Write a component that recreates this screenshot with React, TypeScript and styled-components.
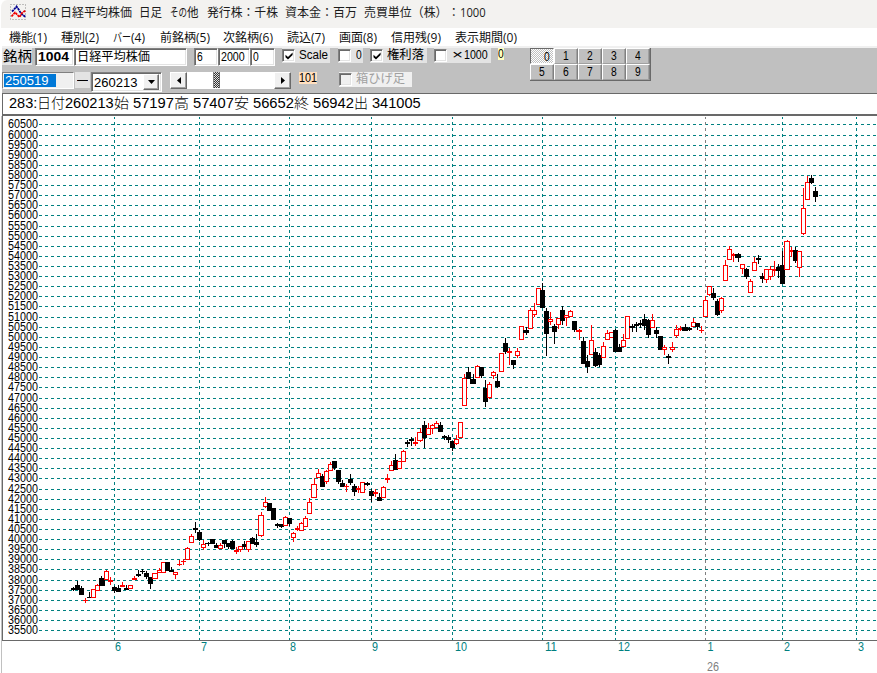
import React, { ReactNode, useLayoutEffect, useRef, useState } from 'react';
import styled, { createGlobalStyle, css } from 'styled-components';

const GlobalStyle = createGlobalStyle`
  * { box-sizing: border-box; }
  html, body { margin: 0; padding: 0; background: #fff; overflow: hidden; }
  body { font: 12px "Liberation Sans", "Noto Sans CJK JP", sans-serif; color: #000; }
`;

/* ---------- text that is condensed or widened to a given width ---------- */

const Slot = styled.span<{ $w: number; $gap?: number }>`
  display: block;
  flex: none;
  width: ${p => p.$w}px;
  margin-left: ${p => p.$gap ?? 0}px;
  white-space: pre;
`;
const Glyphs = styled.span`
  display: inline-block;
  transform-origin: 0 50%;
`;

function Fit({ w, gap, children }: { w: number; gap?: number; children: ReactNode }) {
  const ref = useRef<HTMLSpanElement>(null);
  const [scale, setScale] = useState(1);
  useLayoutEffect(() => {
    if (ref.current) setScale(w / ref.current.offsetWidth);
  }, [w]);
  return (
    <Slot $w={w} $gap={gap}>
      <Glyphs ref={ref} style={{ transform: `scaleX(${scale})` }}>{children}</Glyphs>
    </Slot>
  );
}

/* ---------- window chrome ---------- */

const Window = styled.div`
  width: 877px;
  height: 673px;
  background: #fff;
  display: flex;
  flex-direction: column;
`;
const TitleBar = styled.header`
  height: 28px;
  flex: none;
  display: flex;
  background: #f3f2f0;
  border-left: 1px solid #fff;
  border-top-left-radius: 7px;
  padding: 4px 0 0 9px;
  font: 12.5px/17px "Open Sans", "Noto Sans CJK JP", sans-serif;
  color: #1c1c1c;
`;
const AppIcon = styled.svg`
  width: 17px;
  height: 17px;
  flex: none;
`;
const MenuBar = styled.nav`
  height: 18px;
  flex: none;
  display: flex;
  padding-left: 9px;
  font: 12px/20px "Open Sans", "Noto Sans CJK JP", sans-serif;
  color: #111;
`;
const Toolbar = styled.section`
  height: 47px;
  flex: none;
  margin-left: 2px;
  border-top: 2px solid #f0f0f0;
  background: #c0c0c0;
  display: flex;
  align-items: flex-start;
`;
const Rows = styled.div`
  width: 528px;
  flex: none;
`;
const Row = styled.div<{ $h: number }>`
  display: flex;
  align-items: flex-start;
  height: ${p => p.$h}px;
`;

/* ---------- controls ---------- */

const Label = styled.div<{ $w: number; $h: number; $gap?: number; $bg?: string; $size?: number }>`
  display: flex;
  justify-content: center;
  flex: none;
  width: ${p => p.$w}px;
  height: ${p => p.$h}px;
  margin-left: ${p => p.$gap ?? 0}px;
  background: ${p => p.$bg ?? '#e3e3e3'};
  font-size: ${p => p.$size ?? 12}px;
  line-height: ${p => p.$h}px;
`;
const sunken = css`
  border: 1px solid;
  border-color: #808080 #fff #fff #808080;
  box-shadow: inset 1px 1px #696969, inset -1px -1px #e3e3e3;
`;
const Field = styled.div<{ $w: number; $h?: number; $gap?: number; $bold?: boolean; $size?: number }>`
  ${sunken}
  display: flex;
  flex: none;
  width: ${p => p.$w}px;
  height: ${p => p.$h ?? 18}px;
  margin-left: ${p => p.$gap ?? 0}px;
  padding-left: 2px;
  background: #fff;
  font-size: ${p => p.$size ?? 12}px;
  font-weight: ${p => (p.$bold ? 700 : 400)};
  line-height: ${p => (p.$h ?? 18) - 2}px;
`;
const DateField = styled.div`
  display: flex;
  flex: none;
  width: 72px;
  height: 17px;
  padding: 1px 0 0 1px;
  background: #f0f0f0;
  border: 1px solid;
  border-color: #808080 #fff #fff #808080;
`;
const Selection = styled.div`
  display: flex;
  width: 52px;
  height: 13px;
  padding-left: 1px;
  background: #0078d7;
  color: #fff;
  font-size: 13px;
  line-height: 13px;
`;
const Combo = styled.div`
  ${sunken}
  display: flex;
  justify-content: space-between;
  flex: none;
  width: 71px;
  height: 20px;
  margin-left: 1px;
  padding: 1px 2px 1px 2px;
  background: #fff;
  font-size: 13px;
  line-height: 17px;
`;
const raised = css`
  background: #f0f0f0;
  border: 1px solid;
  border-color: #fff #696969 #696969 #fff;
  box-shadow: inset -1px -1px #a0a0a0;
`;
const ArrowButton = styled.div<{ $w?: number; $h?: number }>`
  ${raised}
  display: flex;
  align-items: center;
  justify-content: center;
  flex: none;
  width: ${p => p.$w ?? 17}px;
  height: ${p => p.$h ?? 17}px;
`;
const Track = styled.div`
  display: flex;
  flex: none;
  width: 121px;
  height: 17px;
  margin-left: 8px;
  background: #fff;
`;
const Thumb = styled.div`
  width: 7px;
  height: 16px;
  margin: 0 54px 0 26px;
  border-left: 1px solid #808080;
  border-right: 1px solid #696969;
  background: repeating-conic-gradient(#333 0 25%, #e0e0e0 0 50%) 0 0 / 2px 2px;
`;
const Check = styled.div<{ $w: number; $gap: number; $off?: boolean }>`
  display: flex;
  align-items: flex-start;
  flex: none;
  width: ${p => p.$w}px;
  height: 15px;
  margin-left: ${p => p.$gap}px;
  background: ${p => (p.$off ? '#f0f0f0' : '#e3e3e3')};
  line-height: 15px;
  color: ${p => (p.$off ? '#a0a0a0' : '#000')};
`;
const Box = styled.div<{ $off?: boolean }>`
  ${sunken}
  flex: none;
  width: 13px;
  height: 13px;
  margin-top: 1px;
  padding: 2px;
  background: ${p => (p.$off ? '#f0f0f0' : '#fff')};
`;
const Tick = styled.svg`
  display: block;
  width: 8px;
  height: 8px;
`;
const Keypad = styled.div`
  display: grid;
  grid-template-columns: repeat(5, 24px);
  grid-auto-rows: 16px;
  flex: none;
  border-right: 1px solid #696969;
  border-bottom: 1px solid #696969;
`;
const Key = styled.div<{ $down?: boolean }>`
  display: flex;
  justify-content: center;
  padding: ${p => (p.$down ? '1px 0 0 9px' : '0')};
  border: 1px solid;
  border-color: ${p => (p.$down ? '#696969 #fff #fff #696969' : '#fff #808080 #a0a0a0 #fff')};
  box-shadow: ${p => (p.$down ? 'none' : 'inset -1px 0 #a0a0a0')};
  background: ${p => (p.$down
    ? 'repeating-conic-gradient(#c0c0c0 0 25%, #fff 0 50%) 0 0 / 2px 2px'
    : '#c0c0c0')};
  line-height: 15px;
`;

/* ---------- quote line and chart ---------- */

const QuoteLine = styled.section`
  display: flex;
  flex: none;
  height: 23px;
  margin-left: 2px;
  padding: 0 0 0 6px;
  border: solid #696969;
  border-width: 1px 0 2px 1px;
  font-size: 14px;
  font-weight: 300;
  line-height: 18px;
`;
const Chart = styled.svg`
  display: block;
  flex: none;
  width: 877px;
  height: 557px;
`;
const AxisText = styled.text`
  font: 12px "Liberation Sans", sans-serif;
`;

type Candle = [x: number, color: 'R' | 'B', high: number, top: number, bottom: number, low: number];
interface Segment { x: number; y: number; candles: Candle[] }

/* Candle values are in thirds of a pixel, relative to the origin of their segment. */
const segments: Segment[] = [
  { x: 0, y: 520, candles: [
    [220,'B',201,204,211,214],[232,'B',182,195,210,210],[244,'B',198,204,224,224],[256,'R',235,241,244,249],
    [268,'B',216,231,234,234],[280,'R',208,208,231,231],[292,'R',192,195,210,210],[305,'B',168,174,197,197],
    [319,'R',150,154,179,179],[331,'R',170,181,185,195],[343,'B',198,201,212,218],[355,'B',195,203,215,215],
    [367,'R',186,195,200,200],[379,'B',195,204,209,209],[391,'R',195,195,206,206],[403,'R',168,174,179,179],
    [415,'B',150,162,167,171],[427,'B',147,153,156,162],[439,'B',153,159,172,177],[451,'B',171,171,192,207],
    [464,'R',159,159,176,176],[478,'R',144,150,158,158],[490,'R',126,126,158,158],[502,'B',126,126,152,152],
    [514,'B',141,150,155,155],[526,'R',156,156,164,177],[538,'R',120,132,135,138],[550,'R',117,123,126,135],
    [562,'R',81,84,117,117],[574,'R',42,48,68,68],[586,'B',6,24,29,39],
  ] },
  { x: 180, y: 440, candles: [
    [58,'B',270,276,299,303],[70,'R',300,312,323,329],[84,'B',306,309,312,317],[97,'B',297,297,312,312],
    [109,'B',310,315,324,324],[121,'R',310,316,326,326],[133,'B',300,300,312,324],[145,'B',309,309,321,326],
    [157,'B',300,303,326,326],[169,'R',321,330,335,342],[181,'R',319,319,329,335],[193,'B',303,312,321,326],
    [205,'R',304,304,329,335],[217,'B',291,294,312,312],[229,'B',282,306,315,321],[243,'R',216,225,287,290],
    [256,'R',171,187,200,204],[268,'B',189,189,212,212],[280,'B',204,204,240,240],[292,'B',249,252,258,263],
    [304,'B',252,252,261,264],[316,'R',228,232,257,257],[328,'B',234,234,251,258],[340,'R',276,280,293,305],
    [352,'R',258,264,269,272],[364,'R',246,250,272,272],[376,'R',228,234,260,260],[388,'R',174,187,221,221],
    [402,'R',114,132,173,173],[415,'R',87,99,112,112],[427,'B',102,108,140,140],[439,'R',90,94,125,132],
    [451,'R',66,73,90,90],[463,'B',63,63,84,90],[475,'B',90,90,125,131],[487,'B',120,129,140,140],
    [499,'R',132,138,141,155],[511,'B',102,117,129,134],[523,'B',132,138,156,168],[535,'R',138,144,149,158],
    [547,'R',127,127,158,158],[562,'B',126,129,134,138],[574,'B',147,153,168,186],[586,'R',147,156,161,170],
    [598,'B',159,171,182,182],[610,'R',138,142,173,173],[622,'R',102,114,119,129],[634,'R',63,76,90,90],
    [646,'B',42,60,90,90],[658,'R',64,64,86,86],[670,'R',31,34,65,65],
  ] },
  { x: 380, y: 340, candles: [
    [82,'B',300,306,311,321],[94,'B',291,297,302,317],[106,'R',291,306,311,317],[120,'R',264,277,302,305],
    [133,'B',243,255,294,324],[145,'R',249,265,284,284],[157,'R',252,256,266,282],[169,'R',243,250,261,264],
    [181,'B',246,255,276,276],[193,'B',285,288,294,300],[205,'B',285,291,300,308],[217,'B',303,303,324,332],
    [229,'R',285,298,311,314],[241,'R',247,247,293,293],[253,'R',102,115,197,197],[265,'B',81,96,117,117],
    [279,'B',102,117,132,132],[292,'R',75,79,112,112],[304,'B',81,81,108,113],[316,'B',120,144,186,201],
    [328,'R',126,133,173,177],[340,'R',93,97,107,117],[352,'B',102,123,141,144],
  ] },
  { x: 500, y: 270, candles: [
    [4,'R',250,250,304,304],[16,'B',204,219,246,251],[28,'R',234,243,248,285],[40,'B',270,270,285,297],
    [52,'R',234,244,257,264],[64,'R',169,169,209,209],[78,'B',171,180,189,195],[91,'R',114,121,176,176],
    [103,'R',99,121,134,140],[115,'R',55,55,104,104],[127,'B',39,60,114,114],[139,'B',114,123,192,258],
    [151,'R',126,147,154,165],[163,'B',162,168,186,222],[175,'R',144,144,164,176],[187,'B',108,120,153,165],
    [199,'R',136,136,143,168],[211,'R',120,124,140,140],[223,'B',153,153,180,185],[237,'R',177,180,185,210],
    [250,'B',201,213,282,282],[262,'B',255,273,291,308],[274,'R',165,211,254,254],[286,'B',234,246,288,291],
    [298,'B',249,255,285,291],[310,'R',216,229,263,263],[322,'R',180,190,209,209],[334,'R',187,187,203,203],
    [346,'B',177,180,246,246],[358,'B',222,231,246,246],[370,'R',192,211,230,230],[382,'R',139,139,206,206],
    [397,'B',162,168,173,185],[409,'B',156,162,167,186],[421,'B',150,159,164,174],[433,'B',132,147,168,180],
    [445,'B',147,150,195,204],[457,'R',132,151,173,173],[469,'B',171,180,192,204],[481,'B',198,198,240,240],
    [493,'R',225,232,239,255],[505,'B',252,258,263,282],[517,'R',216,232,239,246],[529,'R',165,178,197,203],
    [541,'R',168,174,179,183],[556,'B',162,171,182,182],[568,'B',171,174,179,183],[580,'R',144,157,170,170],
    [592,'B',159,159,171,180],
  ] },
  { x: 680, y: 160, candles: [
    [64,'R',498,510,513,519],[76,'R',408,421,470,470],[88,'R',379,379,402,408],[100,'B',384,399,414,420],
    [112,'B',417,423,465,468],[124,'R',411,415,450,459],[136,'R',300,316,362,362],[148,'R',258,268,299,299],
    [160,'R',279,282,287,306],[175,'B',279,282,294,306],[187,'R',313,313,326,342],[199,'B',324,327,351,357],
    [211,'R',357,364,398,398],[223,'R',291,307,332,332],[235,'B',285,294,299,312],[247,'B',339,348,357,369],
    [259,'R',328,328,359,369],[271,'R',318,328,350,360],[283,'R',303,328,333,348],[295,'B',312,321,333,354],
    [307,'B',273,315,372,372],[321,'R',240,244,328,328],[334,'R',261,270,275,291],[346,'B',261,270,303,309],
    [358,'R',274,274,323,351],[370,'R',84,145,221,225],[382,'R',48,67,119,119],[394,'B',45,54,69,72],
    [406,'B',81,93,111,126],
  ] },
];

const months = [
  { line: 114, x: 115, text: '6' }, { line: 199, x: 201, text: '7' },
  { line: 289, x: 290, text: '8' }, { line: 371, x: 372, text: '9' },
  { line: 452, x: 455, text: '10' }, { line: 542, x: 545, text: '11' },
  { line: 615, x: 618, text: '12' }, { line: 705, x: 707.5, text: '1', yearStart: true },
  { line: 782, x: 784, text: '2' }, { line: 856, x: 858, text: '3' },
];
const levels = Array.from({ length: 51 }, (_, i) => ({
  price: 60500 - 500 * i,
  y: Math.floor(124.9 + 10.115 * i),
}));

function CandleSeries({ x: ox, y: oy, candles }: Segment) {
  let prev = candles[0][0];
  let prevWide = false;
  return (
    <g transform={`translate(${ox} ${oy})`}>
      {candles.map(([v, color, high, top, bottom, low]) => {
        const wide = v - prev >= 13 && !prevWide;
        prev = v;
        prevWide = wide;
        const cx = Math.floor(v / 3);
        const left = wide ? Math.round(v / 3 - 3) : cx - 2;
        const w = wide ? 6 : 5;
        const red = color === 'R';
        const fill = red ? '#f00' : '#000';
        const hollow = red && bottom - top > 5;
        const t = hollow ? Math.floor(top / 3) : Math.round(top / 3);
        const b = hollow ? Math.floor(bottom / 3) + 1 : Math.max(t + 1, Math.round(bottom / 3));
        const h = Math.min(t, Math.round(high / 3));
        const l = Math.max(b, Math.round(low / 3));
        return (
          <g key={v}>
            <rect x={cx} y={h} width={1} height={l - h} fill={fill} />
            {hollow
              ? <rect x={left + 0.5} y={t + 0.5} width={w - 1} height={b - t - 1} fill="#fff" stroke="#f00" />
              : <rect x={left} y={t} width={w} height={b - t} fill={fill} />}
          </g>
        );
      })}
    </g>
  );
}

function PriceChart() {
  return (
    <Chart viewBox="0 116 877 557" shapeRendering="crispEdges">
      <rect x={1} y={116} width={1} height={557} fill="#c0c0c0" />
      <rect x={2} y={116} width={1} height={525} fill="#696969" />
      <rect x={2} y={640} width={875} height={1} fill="#696969" />
      {levels.map(l => (
        <g key={l.price}>
          <rect x={39} y={l.y} width={838} height={1} fill="url(#dashRow)" />
          <AxisText x={8} y={l.y + 4} textLength={30} lengthAdjust="spacingAndGlyphs">{l.price}</AxisText>
        </g>
      ))}
      <defs>
        <pattern id="dashRow" x={39} y={0} width={6} height={1} patternUnits="userSpaceOnUse">
          <rect width={3} height={1} fill="#008080" />
        </pattern>
      </defs>
      {months.map(m => (
        <g key={m.line}>
          <path
            d={`M${m.line + 0.5} 117V640`}
            stroke={m.yearStart ? '#808080' : '#008080'}
            strokeDasharray="3 3"
            strokeDashoffset={1}
          />
          <AxisText x={m.x} y={651} fill="#008080" textLength={m.text.length * 6} lengthAdjust="spacingAndGlyphs">
            {m.text}
          </AxisText>
        </g>
      ))}
      <AxisText x={707} y={671} fill="#808080" textLength={12} lengthAdjust="spacingAndGlyphs">26</AxisText>
      {segments.map(s => <CandleSeries key={s.x} {...s} />)}
    </Chart>
  );
}

const titleWords: [string, number, number][] = [
  ['1004', 26, 4], ['日経平均株価', 72, 3], ['日足', 23, 7], ['その', 17, 8], ['他', 12, 0],
  ['発行株：千株', 71, 8], ['資本金：百万', 72, 7], ['売買単位（株）', 84, 7], ['：', 12, 0], ['1000', 26, 0],
];
const menuItems: [string, number, number][] = [
  ['機能(1)', 38, 0], ['種別(2)', 38, 14], ['バー', 18, 14], ['(4)', 14, 0], ['前銘柄(5)', 50, 15],
  ['次銘柄(6)', 50, 13], ['読込(7)', 38, 14], ['画面(8)', 38, 14], ['信用残(9)', 50, 14], ['表示期間(0)', 62, 14],
];
const quoteWords: [string, number, number][] = [
  ['283:', 28, 0], ['日付', 28, 0], ['260213', 49, 0], ['始', 15, 0], ['57197', 41, 4], ['高', 15, 0],
  ['57407', 41, 4], ['安', 15, 0], ['56652', 41, 4], ['終', 15, 0], ['56942', 41, 4], ['出', 14, 0],
  ['341005', 49, 4],
];

const Checkmark = () => (
  <Tick viewBox="0 0 8 8"><path d="M.5 2.7v2.6L3 7.6 7.6 3V.4L3 5Z" fill="#000" /></Tick>
);

export default function App() {
  return (
    <Window>
      <GlobalStyle />
      <TitleBar>
        <AppIcon viewBox="0 0 17 17">
          <rect x="0.5" y="0.5" width="15" height="15" fill="#f3f2f0" stroke="#888" strokeDasharray="1 2" />
          <path d="M2 7.5 4.5 5 6.5 2.5 9 6 11 9.5 15.5 13" fill="none" stroke="#000090" strokeWidth="1.8" strokeDasharray="2.4 .6" />
          <path d="M1.5 12.5 5 8.5 9.5 13 12 9 15.5 6.5" fill="none" stroke="#e00" strokeWidth="1.8" strokeDasharray="2.4 .6" />
        </AppIcon>
        {titleWords.map(([t, w, gap]) => <Fit key={t} w={w} gap={gap}>{t}</Fit>)}
      </TitleBar>
      <MenuBar>
        {menuItems.map(([t, w, gap]) => <Fit key={t} w={w} gap={gap}>{t}</Fit>)}
      </MenuBar>
      <Toolbar>
        <Rows>
          <Row $h={24}>
            <Label $w={30} $h={17} $size={14}><Fit w={29}>銘柄</Fit></Label>
            <Field $w={39} $gap={3} $bold $size={13}><Fit w={31}>1004</Fit></Field>
            <Field $w={113}><Fit w={73}>日経平均株価</Fit></Field>
            <Field $w={24} $gap={7}><Fit w={6}>6</Fit></Field>
            <Field $w={32}><Fit w={24}>2000</Fit></Field>
            <Field $w={25}><Fit w={6}>0</Fit></Field>
            <Check $w={48} $gap={7}><Box><Checkmark /></Box><Fit w={29} gap={4}>Scale</Fit></Check>
            <Check $w={25} $gap={8}><Box /><Fit w={6} gap={5}>0</Fit></Check>
            <Check $w={57} $gap={7}><Box><Checkmark /></Box><Fit w={37} gap={4}>権利落</Fit></Check>
            <Check $w={57} $gap={7}><Box /><Fit w={11} gap={5}>×</Fit><Fit w={24} gap={1}>1000</Fit></Check>
            <Label $w={6} $h={12} $gap={7} $bg="#ffffc0"><Fit w={6}>0</Fit></Label>
          </Row>
          <Row $h={20}>
            <DateField><Selection><Fit w={43}>250519</Fit></Selection></DateField>
            <Label $w={15} $h={16} $gap={1}><Fit w={11}>―</Fit></Label>
            <Combo>
              <Fit w={43}>260213</Fit>
              <ArrowButton $w={16} $h={16}>
                <svg width="7" height="4"><path d="M0 0h7L3.5 4Z" /></svg>
              </ArrowButton>
            </Combo>
            <Track>
              <ArrowButton><svg width="4" height="7"><path d="M4 0v7L0 3.5Z" /></svg></ArrowButton>
              <Thumb />
              <ArrowButton><svg width="4" height="7"><path d="M0 0v7l4-3.5Z" /></svg></ArrowButton>
            </Track>
            <Label $w={18} $h={12} $gap={8} $bg="#ffdfbf"><Fit w={18}>101</Fit></Label>
            <Check $w={73} $gap={22} $off><Box $off /><Fit w={49} gap={4}>箱ひげ足</Fit></Check>
          </Row>
        </Rows>
        <Keypad>
          {[...'0123456789'].map(k => <Key key={k} $down={k === '0'}><Fit w={6}>{k}</Fit></Key>)}
        </Keypad>
      </Toolbar>
      <QuoteLine>
        {quoteWords.map(([t, w, gap]) => <Fit key={t} w={w} gap={gap}>{t}</Fit>)}
      </QuoteLine>
      <PriceChart />
    </Window>
  );
}
